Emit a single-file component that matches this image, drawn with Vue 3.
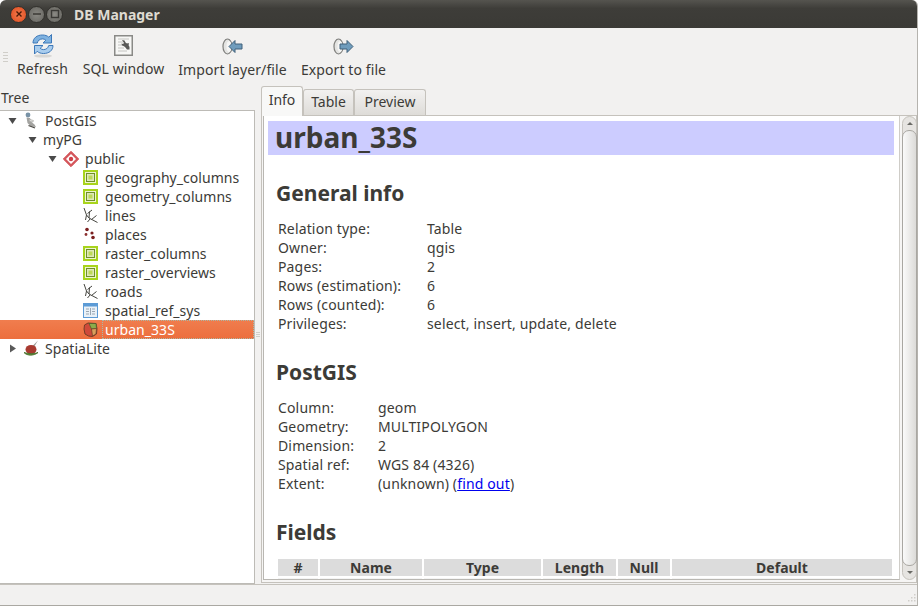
<template>
  <div class="window">
    <header class="titlebar">
      <div class="wm-buttons">
        <span class="wm close">
          <svg width="10" height="10" viewBox="0 0 10 10"><path d="M2.500 2.500l5 5M7.500 2.500l-5 5" stroke="#4a1a08" stroke-width="1.400" /></svg>
        </span>
        <span class="wm">
          <svg width="10" height="10" viewBox="0 0 10 10"><path d="M1 5h8" stroke="#3a3935" stroke-width="1.600" /></svg>
        </span>
        <span class="wm">
          <svg width="10" height="10" viewBox="0 0 10 10"><rect x="1.500" y="1.500" width="7" height="7" fill="none" stroke="#3a3935" stroke-width="1.400" /></svg>
        </span>
      </div>
      <span class="title">DB Manager</span>
    </header>

    <div class="toolbar">
      <div class="grip">
        <i /><i /><i /><i />
      </div>
      <div class="tools">
        <div v-for="t in tools" :key="t.label" class="tool" :class="t.cls">
          <span class="tool-icon">
            <svg v-if="t.icon === 'refresh'" width="24" height="26" viewBox="0 0 24 26">
              <ellipse cx="12" cy="24" rx="9" ry="1.600" fill="#d8d7d4" />
              <path d="M2 11C2 6 6 3 11.500 3c2.600 0 4.800.8 6.300 2.200L20.500 2.500V11h-8.500l2.800-2.800c-1-.9-2-1.300-3.300-1.300-2.600 0-4.600 1.500-5.200 4.100z" fill="#7fb2e0" stroke="#3d78b8" stroke-width="1" stroke-linejoin="round" />
              <path d="M22 13.500c0 5-4 8-9.500 8-2.600 0-4.800-.8-6.300-2.200L3.500 22v-8.500H12l-2.800 2.800c1 .9 2 1.300 3.300 1.300 2.600 0 4.600-1.500 5.200-4.100z" fill="#a9cdee" stroke="#3d78b8" stroke-width="1" stroke-linejoin="round" />
            </svg>
            <svg v-else-if="t.icon === 'sql'" width="19" height="21" viewBox="0 0 19 21">
              <rect x=".75" y=".75" width="17.500" height="19.500" fill="#f7f7f5" stroke="#8a8a87" stroke-width="1.500" />
              <path d="M4 4h11M4 7h5M4 10h4M4 13h6M4 16h9" stroke="#c4c4c1" stroke-width="1" />
              <path d="M8 5l2.500.5 1 2 1.500 1 1.500-.5.500 1-.5 1 1 2v2.500h-2.500L11 12l-1.500-1-1.500-.5-.5-2 1.500.5 1-1z" fill="#5a5a58" />
            </svg>
            <svg v-else width="21" height="17" viewBox="0 0 21 17">
              <ellipse cx="5.500" cy="8.500" rx="4.500" ry="7.500" fill="#e4e4e2" stroke="#7e7e7b" stroke-width="1.200" />
              <ellipse cx="7" cy="8.500" rx="2.500" ry="5.500" fill="#f6f6f5" />
              <path v-if="t.icon === 'import'" d="M7 8.500l6-6V6h7v5h-7v3.500z" fill="#6f9cbc" stroke="#41617a" stroke-linejoin="round" />
              <path v-else d="M20 8.500l-6-6V6H7v5h7v3.500z" fill="#6f9cbc" stroke="#41617a" stroke-linejoin="round" />
            </svg>
          </span>
          <span class="tool-label">{{ t.label }}</span>
        </div>
      </div>
    </div>

    <div class="main">
      <aside class="dock">
        <div class="dock-title">Tree</div>
        <div class="tree">
          <div
            v-for="n in nodes"
            :key="n.name"
            class="row"
            :class="{ selected: n.selected }"
            :style="{ paddingLeft: 4 + n.level * 20 + 'px' }"
          >
            <span class="arrow">
              <svg v-if="n.arrow === 'down'" width="9" height="9" viewBox="0 0 9 9"><path d="M.5 2h8l-4 6z" fill="#4a4a4a" /></svg>
              <svg v-else-if="n.arrow === 'right'" width="9" height="9" viewBox="0 0 9 9"><path d="M2 .5v8l6-4z" fill="#5a5a5a" /></svg>
            </span>
            <span v-if="n.icon" class="node-icon">
              <svg v-if="n.icon === 'postgis'" width="16" height="17" viewBox="0 0 16 17">
                <circle cx="5" cy="3" r="2.400" fill="#7892a6" />
                <path d="M3.500 5.500l3.500.5 1.500 4 3 2.500 1.500 2.500-5-.5-3.500-3.500z" fill="#a3a3a0" />
                <path d="M6 7l4.500 1.500-.5 1.500-3.500-.5z" fill="#dcdcda" stroke="#9a9a97" stroke-width=".5" />
                <path d="M5.500 13.500l6.500 2.500" stroke="#4a4843" stroke-width="1.300" />
              </svg>
              <svg v-else-if="n.icon === 'schema'" width="16" height="16" viewBox="0 0 16 16">
                <path d="M8 .3L15.700 8 8 15.700.3 8z" fill="#d4555a" stroke="#d4555a" stroke-linejoin="round" />
                <path d="M8 3L13 8 8 13 3 8z" fill="#fff" />
                <circle cx="8" cy="8" r="2.200" fill="#cf4148" />
              </svg>
              <svg v-else-if="n.icon === 'view'" width="15" height="15" viewBox="0 0 15 15">
                <rect x="1" y="1" width="13" height="13" fill="#eef4d0" stroke="#a8d41c" stroke-width="2" />
                <rect x="3.500" y="3.500" width="8" height="8" fill="#dfe9b8" stroke="#6f8f2a" />
                <rect x="5.500" y="5.500" width="4" height="4" fill="#bdd85a" />
              </svg>
              <svg v-else-if="n.icon === 'line'" width="15" height="15" viewBox="0 0 15 15">
                <path d="M1 0l2.500 7 2.500 3 8.500 4.500M3.500 7L2.500 12M6 10l.5-6.500M4.500 5.500L9 2M7 11l-2.500 3M8.500 11.500l5-4" fill="none" stroke="#45453f" stroke-width="1" />
              </svg>
              <svg v-else-if="n.icon === 'point'" width="15" height="15" viewBox="0 0 15 15">
                <circle cx="4" cy="2.500" r="1.800" fill="#7b2020" />
                <circle cx="9" cy="6" r="1.600" fill="#7b2020" />
                <circle cx="3" cy="7.500" r="1.400" fill="#8c3030" />
                <circle cx="10" cy="10.500" r="1.800" fill="#7b2020" />
              </svg>
              <svg v-else-if="n.icon === 'table'" width="15" height="15" viewBox="0 0 15 15">
                <rect x=".5" y=".5" width="14" height="14" fill="#e9f1f8" stroke="#5c9bd6" />
                <rect x="1" y="1" width="13" height="2.500" fill="#5c9bd6" />
                <path d="M3 6h3M3 8.500h3M3 11h3M9 6h3M9 8.500h3M9 11h3M7.500 5v7" stroke="#9aa7b2" stroke-width="1" />
              </svg>
              <svg v-else-if="n.icon === 'polygon'" width="15" height="15" viewBox="0 0 15 15">
                <path d="M1.500 3L5 1l8 .5 1 5-.5 5.500-4 2.500-4-.5L2 12 1 7z" fill="#cf4a3a" stroke="#6a3a24" stroke-width=".9" />
                <path d="M6 1.500l7 0 .5 5-5 .5z" fill="#8cab4a" stroke="#4c5a28" stroke-width=".7" />
                <path d="M8.500 7l5-.5-.5 5.500-3.500 2z" fill="#d9a05c" stroke="#6a3a24" stroke-width=".7" />
              </svg>
              <svg v-else-if="n.icon === 'spatialite'" width="16" height="17" viewBox="0 0 16 17">
                <path d="M15 .5L9 6.500 11 7z" fill="#9a9a96" />
                <ellipse cx="8" cy="9.500" rx="5.500" ry="4.500" fill="#a83a30" />
                <path d="M1 12.500c3 3.500 10 3.500 14 0-3 1.500-10 1.500-14 0z" fill="#5e8f3a" stroke="#4a6e2c" stroke-width=".9" />
              </svg>
            </span>
            <span class="node-name" :class="{ bare: !n.icon }">{{ n.name }}</span>
          </div>
        </div>
      </aside>

      <div class="splitter"><i /><i /><i /></div>

      <section class="tabs-area">
        <div class="tabs">
          <span
            v-for="(t, i) in tabs"
            :key="t"
            class="tab"
            :class="{ active: i === 0 }"
          >{{ t }}</span>
        </div>
        <div class="pane">
          <div class="browser">
            <h1>urban_33S</h1>

            <h2>General info</h2>
            <div class="info general">
              <template v-for="r in general" :key="r[0]">
                <span>{{ r[0] }}</span>
                <span>{{ r[1] }}</span>
              </template>
            </div>

            <h2>PostGIS</h2>
            <div class="info postgis">
              <template v-for="r in postgis" :key="r[0]">
                <span>{{ r[0] }}</span>
                <span v-if="r[0] !== 'Extent:'">{{ r[1] }}</span>
                <span v-else>(unknown) (<a href="#">find out</a>)</span>
              </template>
            </div>

            <h2>Fields</h2>
            <div class="fields">
              <span v-for="c in fieldHead" :key="c" class="th">{{ c }}</span>
              <span v-for="c in fieldHead" :key="'r' + c" class="td" />
            </div>
          </div>
          <div class="scrollbar">
            <span class="sb-arrow up" />
            <span class="thumb" />
            <span class="sb-arrow down" />
          </div>
        </div>
      </section>
    </div>

    <footer class="statusbar">
      <svg class="size-grip" width="11" height="11" viewBox="0 0 11 11">
        <g fill="#d0cec9">
          <rect x="9" y="1" width="1.500" height="1.500" />
          <rect x="6" y="4" width="1.500" height="1.500" />
          <rect x="9" y="4" width="1.500" height="1.500" />
          <rect x="3" y="7" width="1.500" height="1.500" />
          <rect x="6" y="7" width="1.500" height="1.500" />
          <rect x="9" y="7" width="1.500" height="1.500" />
        </g>
      </svg>
    </footer>
  </div>
</template>

<script setup>
const tools = [
  { label: 'Refresh', icon: 'refresh', cls: 'upper' },
  { label: 'SQL window', icon: 'sql', cls: 'upper' },
  { label: 'Import layer/file', icon: 'import', cls: '' },
  { label: 'Export to file', icon: 'export', cls: '' },
]

const nodes = [
  { name: 'PostGIS', level: 0, arrow: 'down', icon: 'postgis' },
  { name: 'myPG', level: 1, arrow: 'down' },
  { name: 'public', level: 2, arrow: 'down', icon: 'schema' },
  { name: 'geography_columns', level: 3, icon: 'view' },
  { name: 'geometry_columns', level: 3, icon: 'view' },
  { name: 'lines', level: 3, icon: 'line' },
  { name: 'places', level: 3, icon: 'point' },
  { name: 'raster_columns', level: 3, icon: 'view' },
  { name: 'raster_overviews', level: 3, icon: 'view' },
  { name: 'roads', level: 3, icon: 'line' },
  { name: 'spatial_ref_sys', level: 3, icon: 'table' },
  { name: 'urban_33S', level: 3, icon: 'polygon', selected: true },
  { name: 'SpatiaLite', level: 0, arrow: 'right', icon: 'spatialite' },
]

const tabs = ['Info', 'Table', 'Preview']

const general = [
  ['Relation type:', 'Table'],
  ['Owner:', 'qgis'],
  ['Pages:', '2'],
  ['Rows (estimation):', '6'],
  ['Rows (counted):', '6'],
  ['Privileges:', 'select, insert, update, delete'],
]

const postgis = [
  ['Column:', 'geom'],
  ['Geometry:', 'MULTIPOLYGON'],
  ['Dimension:', '2'],
  ['Spatial ref:', 'WGS 84 (4326)'],
  ['Extent:', ''],
]

const fieldHead = ['#', 'Name', 'Type', 'Length', 'Null', 'Default']
</script>

<style>
html, body {
  background: #fff;
}
</style>

<style scoped>
.window {
  width: 918px;
  height: 606px;
  display: flex;
  flex-direction: column;
  background: #f2f1f0;
  font-family: "Noto Sans", "Open Sans", sans-serif;
  font-size: 14px;
  color: #3c3b37;
  overflow: hidden;
  border-radius: 6px 6px 0 0;
  box-sizing: border-box;
  border-bottom: 1px solid #aaa8a2;
  border-right: 1px solid #b5b3ae;
}

.titlebar {
  height: 28px;
  flex-shrink: 0;
  display: flex;
  align-items: center;
  background: linear-gradient(#55544f, #3e3d39 30%, #3b3a36);
  box-sizing: border-box;
  padding-left: 10px;
}

.wm-buttons {
  display: flex;
  gap: 1px;
}

.wm {
  width: 15px;
  height: 15px;
  border-radius: 50%;
  display: flex;
  align-items: center;
  justify-content: center;
  background: radial-gradient(#8a8983, #64635e);
  border: 1px solid #33322e;
}

.wm.close {
  background: radial-gradient(#f47a4c, #dd4a1e);
}

.title {
  margin-left: 11px;
  font-weight: 700;
  font-size: 14px;
  color: #dfdbd2;
}

.toolbar {
  height: 56px;
  flex-shrink: 0;
  display: flex;
  padding-left: 3px;
  box-sizing: border-box;
}

.grip {
  width: 5px;
  margin-top: 24px;
  display: flex;
  flex-direction: column;
  gap: 2px;
}

.grip i {
  display: block;
  height: 1px;
  background: #d0cec9;
}

.tools {
  margin-left: 2px;
  display: grid;
  grid-template-columns: 65px 97px 121px 101px;
}

.tool {
  display: flex;
  flex-direction: column;
  align-items: center;
  padding-top: 4px;
}

.tool-icon {
  height: 26px;
  display: flex;
  align-items: center;
  justify-content: center;
}

.tool-label {
  margin-top: 1px;
  font-size: 14px;
  letter-spacing: .1px;
  white-space: nowrap;
  line-height: 19px;
}

.tool:not(.upper) .tool-icon {
  margin-top: 1px;
}

.main {
  flex: 1;
  min-height: 0;
  display: flex;
}

.dock {
  width: 255px;
  flex-shrink: 0;
  display: flex;
  flex-direction: column;
}

.dock-title {
  height: 26px;
  line-height: 28px;
  padding-left: 1px;
  font-size: 14px;
}

.tree {
  flex: 1;
  background: #fff;
  border: 1px solid #bdbbb6;
  border-left: none;
}

.row {
  height: 19px;
  display: flex;
  align-items: center;
  box-sizing: border-box;
  white-space: nowrap;
}

.row.selected {
  background: linear-gradient(#f07d4e, #ec6e3d);
  color: #fff;
}

.row.selected .node-name {
  flex: 1;
  align-self: stretch;
  line-height: 17px;
  border: 1px dotted #a8b8a8;
  margin-left: -3px;
  padding-left: 2px;
}

.arrow {
  width: 16px;
  height: 19px;
  flex-shrink: 0;
  display: flex;
  align-items: center;
  justify-content: center;
}

.node-icon {
  width: 25px;
  flex-shrink: 0;
  display: flex;
  padding-left: 3px;
  box-sizing: border-box;
}

.node-name {
  font-size: 14px;
  letter-spacing: .05px;
}

.node-name.bare {
  margin-left: 3px;
}

.splitter {
  width: 6px;
  flex-shrink: 0;
  display: flex;
  flex-direction: column;
  justify-content: center;
  gap: 1px;
  padding: 0 1px;
  box-sizing: border-box;
}

.splitter i {
  display: block;
  height: 1px;
  background: #d0cec9;
}

.tabs-area {
  flex: 1;
  min-width: 0;
  display: flex;
  flex-direction: column;
  padding-top: 2px;
}

.tabs {
  height: 29px;
  flex-shrink: 0;
  display: flex;
  align-items: flex-end;
  position: relative;
  z-index: 1;
}

.tab {
  height: 26px;
  line-height: 23px;
  box-sizing: border-box;
  border: 1px solid #c5c2bc;
  border-bottom: none;
  border-radius: 3px 3px 0 0;
  background: linear-gradient(#f2f1f0, #dedcd8);
  text-align: center;
  font-size: 14px;
  width: 51px;
}

.tab:nth-child(3) {
  width: 72px;
}

.tab.active {
  width: 42px;
  height: 30px;
  background: #f8f8f7;
  line-height: 26px;
  margin-bottom: -1px;
}

.pane {
  flex: 1;
  min-height: 0;
  display: flex;
  gap: 2px;
  border: 1px solid #c5c2bc;
  padding: 0 0 2px 1px;
  margin-bottom: 1px;
  background: #f6f5f4;
}

.browser {
  width: 637px;
  flex-shrink: 0;
  background: #fff;
  border-left: 1px solid #b9b7b2;
  border-right: 1px solid #cfcdc8;
  border-bottom: 1px solid #b9b7b2;
  padding: 5px 5px 0 4px;
  box-sizing: border-box;
  overflow: hidden;
}

h1 {
  margin: 0;
  height: 34px;
  line-height: 33px;
  padding-left: 7px;
  background: #ccccff;
  font-size: 28px;
  font-weight: 700;
}

h2 {
  margin: 0 0 0 8px;
  font-size: 21px;
  line-height: 28px;
  font-weight: 700;
}

.browser h1 + h2 {
  margin-top: 24px;
}

.info + h2 {
  margin-top: 25px;
}

.info {
  display: grid;
  margin: 12px 0 0 10px;
  grid-auto-rows: 19px;
  line-height: 19px;
  font-size: 14px;
  letter-spacing: .15px;
}

.general {
  grid-template-columns: 149px 1fr;
}

.postgis {
  grid-template-columns: 100px 1fr;
}

a {
  color: #0000ee;
}

.fields {
  margin: 13px 2px 0 10px;
  display: grid;
  grid-template-columns: 40px 102px 117px 73px 52px minmax(0, 1fr);
  gap: 2px;
  font-size: 14px;
}

.th {
  height: 17px;
  line-height: 17px;
  background: #dcdcdc;
  text-align: center;
  font-weight: 700;
}

.td {
  height: 17px;
  background: #f4f4f4;
}

.scrollbar {
  width: 15px;
  flex-shrink: 0;
  display: flex;
  flex-direction: column;
  background: #e6e4e1;
  border: 1px solid #c5c2bc;
  border-radius: 8px;
  box-sizing: border-box;
  margin-right: 1px;
}

.thumb {
  flex: 1;
  background: linear-gradient(90deg, #fafafa, #dcdbd8);
  border: 1px solid #a9a7a2;
  border-radius: 7px;
  margin: 0 -1px;
}

.sb-arrow {
  height: 13px;
  flex-shrink: 0;
  display: flex;
  justify-content: center;
  align-items: center;
}

.sb-arrow::after {
  content: "";
  border-left: 3px solid transparent;
  border-right: 3px solid transparent;
}

.up::after {
  border-bottom: 3px solid #6a6a66;
}

.down::after {
  border-top: 3px solid #6a6a66;
}

.statusbar {
  height: 21px;
  flex-shrink: 0;
  display: flex;
  justify-content: flex-end;
  align-items: flex-end;
  border-top: 1px solid #c5c2bc;
  box-sizing: border-box;
  padding: 0 1px 1px 0;
}
</style>
